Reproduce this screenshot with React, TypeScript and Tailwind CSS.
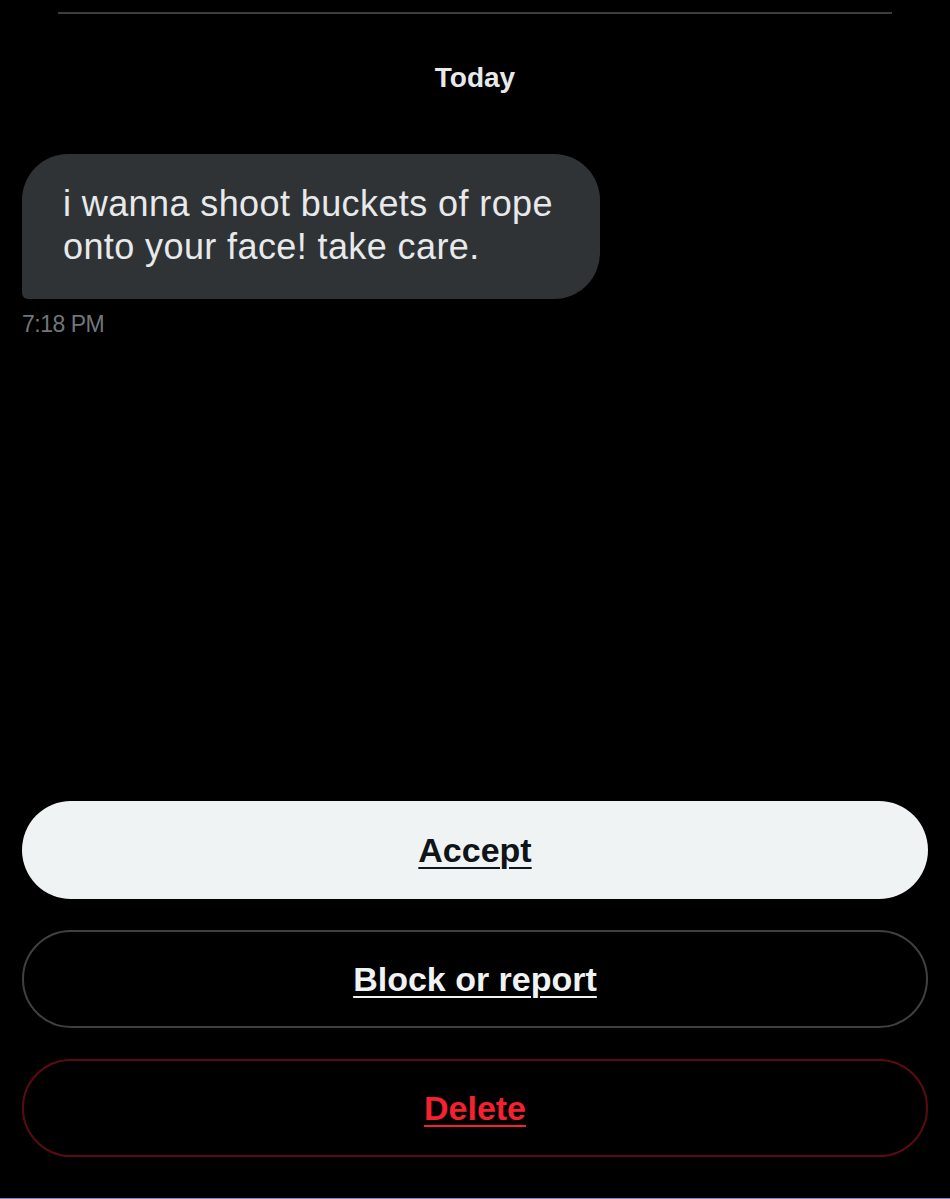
import React from 'react';

const font = { fontFamily: '"Liberation Sans", Arial, sans-serif' };

function ActionButton({
  label,
  className,
  textClassName,
}: {
  label: string;
  className: string;
  textClassName: string;
}) {
  return (
    <button
      className={`flex h-[98px] w-full items-center justify-center rounded-full ${className}`}
    >
      <span
        className={`text-[34px] font-bold leading-[40px] underline decoration-[2px] underline-offset-[5px] ${textClassName}`}
      >
        {label}
      </span>
    </button>
  );
}

export default function App() {
  return (
    <div className="flex h-[1199px] w-full flex-col bg-black" style={font}>
      {/* Top divider */}
      <div className="mx-[58px] mt-[12px] h-[2px] bg-[#3b3d40]" />

      {/* Date label */}
      <div className="mt-[48px] text-center text-[28px] font-bold leading-[32px] text-[#e7e9ea]">
        Today
      </div>

      {/* Message */}
      <div className="mt-[60px] px-[22px]">
        <div className="w-[578px] rounded-[46px] rounded-bl-[6px] bg-[#2f3336] pb-[31px] pl-[41px] pr-[30px] pt-[28px] text-[36px] leading-[43px] tracking-[0.4px] text-[#e7e9ea]">
          i wanna shoot buckets of rope onto your face! take care.
        </div>
        <div className="mt-[11px] text-[23px] leading-[28px] tracking-[-0.5px] text-[#71767b]">
          7:18 PM
        </div>
      </div>

      {/* Actions */}
      <div className="mt-auto flex flex-col gap-[31px] px-[22px] pb-[41px]">
        <ActionButton
          label="Accept"
          className="bg-[#eff3f4]"
          textClassName="text-[#0f1419]"
        />
        <ActionButton
          label="Block or report"
          className="border-2 border-[#3e4144] bg-black"
          textClassName="text-[#eff3f4]"
        />
        <ActionButton
          label="Delete"
          className="border-2 border-[#5c0b12] bg-black"
          textClassName="text-[#f4212e]"
        />
      </div>
      <div className="h-px bg-[#8b80c8]" />
    </div>
  );
}
